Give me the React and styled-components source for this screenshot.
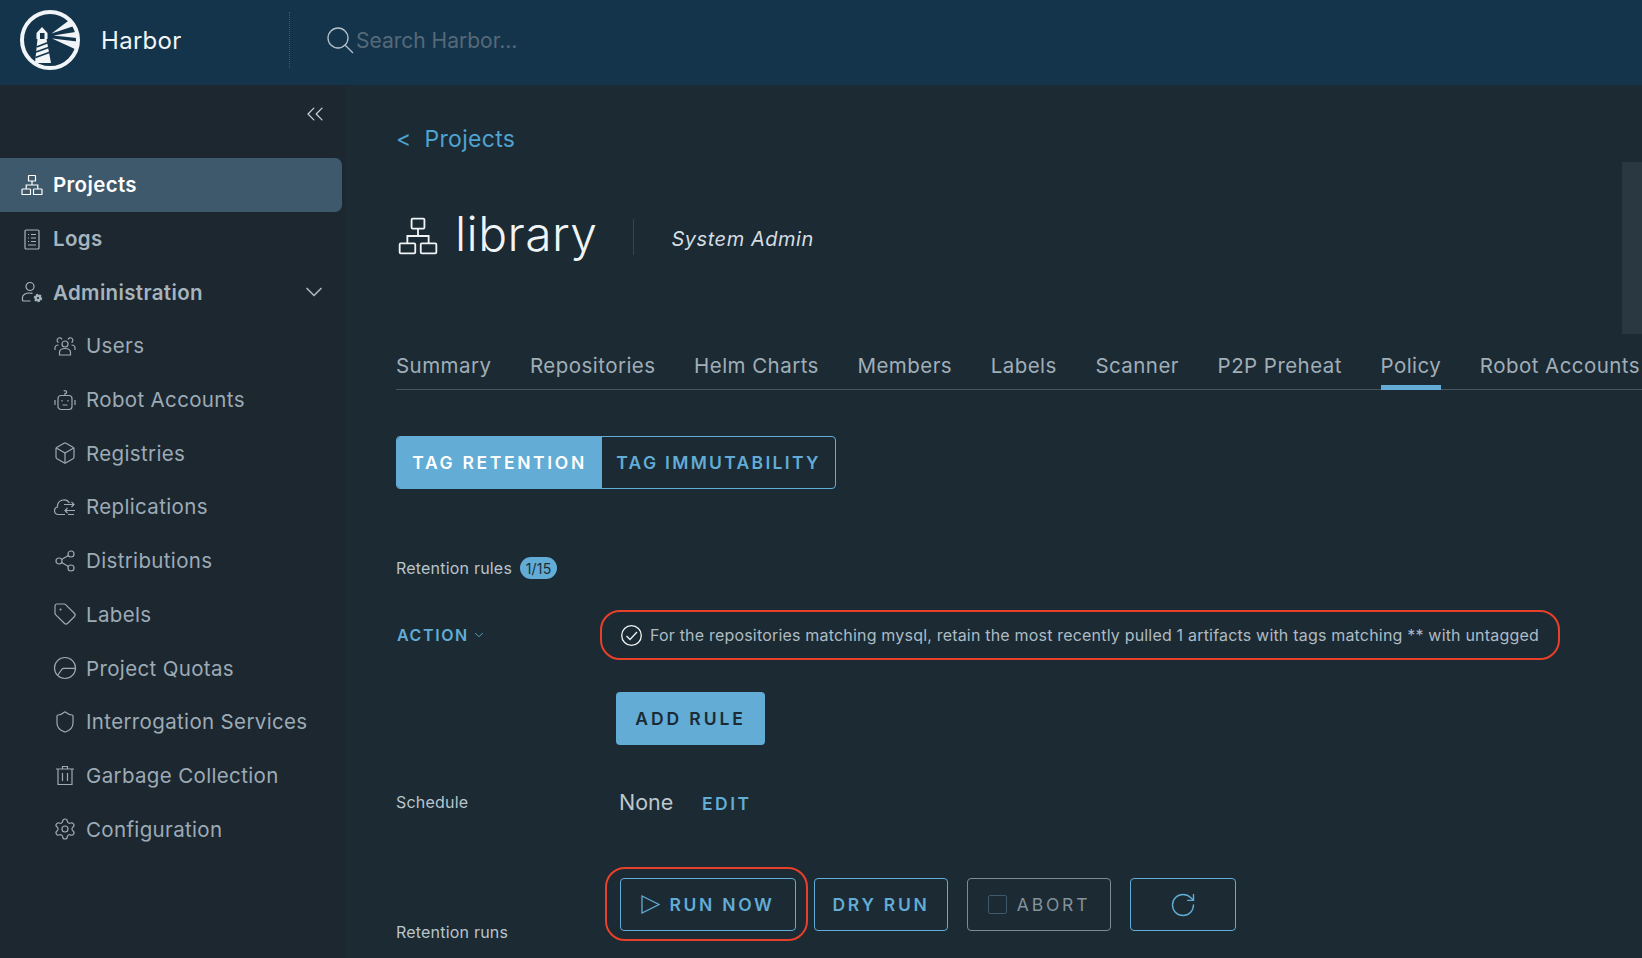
import styled, { createGlobalStyle } from "styled-components";
import { ChevronDown, ChevronsLeft, RotateCw, Settings, Share2, Shield, Tag, Box } from "lucide-react";

const GlobalStyle = createGlobalStyle`
  html, body {
    margin: 0;
    padding: 0;
    height: 100%;
    overflow: hidden;
    background: #1b2a33;
    font-family: Inter, "Liberation Sans", sans-serif;
  }
  * { box-sizing: border-box; }
`;

const BLUE = "#62acd6";

const Page = styled.div`
  width: 1642px;
  height: 958px;
  display: flex;
  flex-direction: column;
  overflow: hidden;
`;

const Header = styled.header`
  height: 85px;
  flex: none;
  display: flex;
  align-items: center;
  padding-bottom: 5px;
  background: #14344c;
`;

const Brand = styled.div`
  width: 289px;
  display: flex;
  align-items: center;
  gap: 21px;
  padding-left: 20px;
  font-size: 24px;
  letter-spacing: 0.3px;
  color: #f2f5f7;
`;

const SearchBox = styled.div`
  height: 56px;
  display: flex;
  align-items: center;
  border-left: 1px dotted #3a5a72;
  padding-left: 37px;
  font-size: 21px;
  color: #566977;
  svg { margin-right: 2px; color: #b4c1ca; }
`;

const Body = styled.div`
  flex: 1;
  display: flex;
  min-height: 0;
`;

const Sidebar = styled.nav`
  width: 346px;
  flex: none;
  background: #1c2730;
`;

const CollapseRow = styled.div`
  height: 54px;
  margin-bottom: 19px;
  display: flex;
  align-items: flex-end;
  justify-content: flex-end;
  padding: 0 17px 11px 0;
  color: #c3ced6;
`;

const NavRow = styled.div`
  height: 53.7px;
  width: 342px;
  display: flex;
  align-items: center;
  gap: 9px;
  padding-left: ${({ $sub }) => ($sub ? "53px" : "20px")};
  padding-right: 14px;
  font-size: 20.5px;
  letter-spacing: 0.35px;
  font-weight: ${({ $sub }) => ($sub ? 400 : 600)};
  color: ${({ $active, $sub }) => ($active ? "#ffffff" : $sub ? "#9cabb6" : "#a6b4be")};
  background: ${({ $active }) => ($active ? "#3e586c" : "transparent")};
  border-radius: ${({ $active }) => ($active ? "0 7px 7px 0" : "0")};
  span { flex: 1; }
`;

const Main = styled.main`
  position: relative;
  flex: 1;
  min-width: 0;
  padding: 39px 0 0 50px;
`;

const Crumb = styled.div`
  height: 30px;
  display: flex;
  align-items: center;
  gap: 13px;
  font-size: 23px;
  letter-spacing: 0.3px;
  color: #4fa3d1;
`;

const TitleRow = styled.div`
  height: 60px;
  margin-top: 52px;
  display: flex;
  align-items: center;
  color: #f1f4f6;
`;

const Title = styled.h1`
  margin: -4px 36px 0 15px;
  font-size: 48px;
  font-weight: 300;
  letter-spacing: 0.4px;
  line-height: 60px;
`;

const Role = styled.div`
  height: 36px;
  display: flex;
  align-items: center;
  margin-top: 1px;
  padding: 4px 0 0 37px;
  border-left: 1px solid #33454f;
  font-size: 20px;
  font-style: italic;
  letter-spacing: 0.55px;
  color: #d5dde2;
`;

const Tabs = styled.div`
  height: 40px;
  margin-top: 84px;
  display: flex;
  gap: 38.6px;
  border-bottom: 1.5px solid #46565f;
`;

const TabItem = styled.div`
  height: 40px;
  padding-top: 2px;
  font-size: 20.5px;
  letter-spacing: 0.45px;
  line-height: 28px;
  white-space: nowrap;
  color: #a0aeb8;
  border-bottom: ${({ $active }) => ($active ? `5px solid ${BLUE}` : "none")};
`;

const Segments = styled.div`
  width: 440px;
  height: 53px;
  margin-top: 46px;
  display: flex;
  border: 1px solid ${BLUE};
  border-radius: 4px;
  overflow: hidden;
`;

const Segment = styled.div`
  display: flex;
  align-items: center;
  justify-content: center;
  width: ${({ $active }) => ($active ? "206px" : "234px")};
  font-size: 17.5px;
  font-weight: 600;
  letter-spacing: ${({ $active }) => ($active ? "2.65px" : "2.3px")};
  color: ${({ $active }) => ($active ? "#ffffff" : BLUE)};
  background: ${({ $active }) => ($active ? BLUE : "transparent")};
`;

const RulesHeading = styled.div`
  height: 24px;
  margin-top: 67px;
  display: flex;
  align-items: center;
  gap: 8px;
  font-size: 16px;
  letter-spacing: 0.2px;
  color: #b9c4cb;
`;

const Badge = styled.span`
  height: 22px;
  width: 37px;
  display: flex;
  align-items: center;
  justify-content: center;
  border-radius: 11px;
  background: ${BLUE};
  font-size: 14px;
  color: #1b2a33;
`;

const RuleRow = styled.div`
  margin-top: 30px;
  display: flex;
  align-items: center;
`;

const ActionLink = styled.div`
  width: 204px;
  display: flex;
  align-items: center;
  gap: 3px;
  padding-left: 1px;
  font-size: 16px;
  font-weight: 600;
  letter-spacing: 1.6px;
  color: ${BLUE};
`;

const Highlight = styled.div`
  border: 2px solid #e8402a;
  border-radius: 20px;
`;

const RuleBox = styled(Highlight)`
  width: 960px;
  height: 50px;
  display: flex;
  align-items: center;
  gap: 8px;
  padding-left: 19px;
  font-size: 16px;
  letter-spacing: 0.19px;
  white-space: nowrap;
  color: #aebbc4;
`;

const Solid = styled.div`
  width: 149px;
  height: 53px;
  margin: 32px 0 0 220px;
  display: flex;
  align-items: center;
  justify-content: center;
  border-radius: 4px;
  background: ${BLUE};
  font-size: 17.5px;
  font-weight: 600;
  letter-spacing: 2.9px;
  color: #1b2a33;
`;

const ScheduleRow = styled.div`
  height: 30px;
  margin-top: 42px;
  display: flex;
  align-items: center;
`;

const FieldLabel = styled.div`
  width: ${({ $w }) => $w}px;
  flex: none;
  font-size: 16px;
  letter-spacing: 0.2px;
  color: #b9c4cb;
`;

const NoneText = styled.div`
  width: 83px;
  font-size: 21.5px;
  color: #bcc7ce;
`;

const EditLink = styled.div`
  margin-top: 2px;
  font-size: 17.5px;
  font-weight: 600;
  letter-spacing: 2.5px;
  color: ${BLUE};
`;

const RunsRow = styled.div`
  margin-top: 50px;
  display: flex;
  align-items: flex-start;
  gap: 6px;
`;

const RunsLabel = styled(FieldLabel)`
  margin-top: 55px;
  margin-right: -6px;
`;

const RunHighlight = styled(Highlight)`
  height: 74px;
  padding: 9px 10px 0 13px;
`;

const ButtonGroup = styled.div`
  display: flex;
  gap: 19px;
  padding-top: 11px;
`;

const Outline = styled.div`
  width: ${({ $w }) => $w}px;
  height: 53px;
  display: flex;
  align-items: center;
  justify-content: center;
  gap: 8px;
  border: 1.5px solid ${({ $disabled }) => ($disabled ? "#7d8b95" : BLUE)};
  border-radius: 4px;
  font-size: 17.5px;
  font-weight: ${({ $disabled }) => ($disabled ? 400 : 600)};
  letter-spacing: ${({ $disabled }) => ($disabled ? "2.8px" : "2.7px")};
  color: ${({ $disabled }) => ($disabled ? "#84929c" : BLUE)};
`;

const EmptyCheck = styled.span`
  width: 19px;
  height: 19px;
  margin-right: 2px;
  border: 1.5px solid #3e586c;
  border-radius: 2px;
`;

const EdgeBar = styled.div`
  position: absolute;
  top: 77px;
  right: 0;
  width: 20px;
  height: 172px;
  background: #2a3842;
`;

const Svg = ({ size = 24, sw = 1.2, children }) => (
  <svg width={size} height={size} viewBox="0 0 24 24" fill="none" stroke="currentColor" strokeWidth={sw} style={{ flex: "none" }}>
    {children}
  </svg>
);

const ProjectsIcon = ({ size, sw }) => (
  <Svg size={size} sw={sw}>
    <rect x="8.5" y="2.5" width="7" height="5.5" rx=".6" />
    <rect x="2" y="16" width="8.5" height="5.5" rx=".6" />
    <rect x="13.5" y="16" width="8.5" height="5.5" rx=".6" />
    <path d="M12 8v4M6.2 16v-4h11.6v4" />
  </Svg>
);

const LogsIcon = () => (
  <Svg>
    <rect x="5" y="3" width="14" height="19" rx="1" />
    <path d="M8 7.5h1M11 7.5h5M8 11h1M11 11h5M8 14.5h1M11 14.5h5M8 18h8" />
  </Svg>
);

const AdminIcon = () => (
  <Svg>
    <circle cx="10" cy="6.5" r="4" />
    <path d="M2.5 21v-3.5c0-2.5 3-4.5 7-4.5 1 0 2 .1 3 .4M2.5 21h8" />
    <circle cx="18" cy="18" r="3.2" fill="currentColor" stroke="currentColor" strokeWidth="2" strokeDasharray="2 1.2" />
    <circle cx="18" cy="18" r="1.1" fill="#1c2730" stroke="none" />
  </Svg>
);

const UsersIcon = () => (
  <Svg>
    <circle cx="12" cy="10" r="3" />
    <path d="M6.5 21v-2.5c0-2.5 2.5-4 5.5-4s5.500 1.500 5.500 4V21z" />
    <path d="M9 5.500a2.500 2.500 0 1 0-3.500 3M15 5.500a2.500 2.500 0 1 1 3.500 3M2 16v-2c0-2 1.500-3 3.500-3M22 16v-2c0-2-1.500-3-3.500-3" />
  </Svg>
);

const RobotIcon = () => (
  <Svg>
    <rect x="5" y="7.500" width="14" height="14" rx="3" />
    <path d="M12 7.500V5.500c1.500 0 1.800-1 1.500-2-.4-1-2-1.200-2.800-.3" />
    <path d="M9 12v1.500M15 12v1.500M9.500 17h5M2 12v5M22 12v5" />
  </Svg>
);

const CloudIcon = () => (
  <Svg>
    <path d="M12 19.500H5.500A3.800 3.800 0 0 1 4.500 12a6.500 6.500 0 0 1 12-4" />
    <path d="M11 9.500h10M18.500 7l2.500 2.500-2.500 2.500M22 15.500H12M14.500 13L12 15.500l2.500 2.500M21 19.500h-6" />
  </Svg>
);

const QuotaIcon = () => (
  <Svg>
    <circle cx="12" cy="12" r="10.500" />
    <path d="M4.500 19.500L9 13.200c.5-.6 1-.8 1.800-.8H22" />
  </Svg>
);

const TrashIcon = () => (
  <Svg>
    <path d="M3 6h18M9.500 6V3.500h5V6M5 6v15.500h14V6M9.500 10v8M14.500 10v8" />
  </Svg>
);

const CheckCircle = () => (
  <svg width="21" height="21" viewBox="0 0 21 21" fill="none" stroke="#eef2f4" strokeWidth="1.300" style={{ flex: "none" }}>
    <circle cx="10.500" cy="10.500" r="9.800" />
    <path d="M5.500 11l3.500 3.500 7-7.500" />
  </svg>
);

const SearchGlyph = () => (
  <svg width="27" height="27" viewBox="0 0 27 27" fill="none" stroke="currentColor" strokeWidth="1.300" style={{ flex: "none" }}>
    <circle cx="11" cy="11" r="10" />
    <path d="M18 18l8 8" />
  </svg>
);

const PlayGlyph = () => (
  <svg width="19" height="19" viewBox="0 0 19 19" fill="none" stroke="currentColor" strokeWidth="1.300" style={{ flex: "none", marginRight: 1 }}>
    <path d="M1 1l17 8.500L1 18z" />
  </svg>
);

const HarborLogo = () => (
  <svg width="60" height="60" viewBox="0 0 60 60" style={{ flex: "none" }}>
    <circle cx="30" cy="30" r="28" fill="#14344c" stroke="#f2f5f7" strokeWidth="4" />
    <path d="M15 53l2.500-24h-1v-6l5.500-6 5.500 6v6h-1L31 53z" fill="#f2f5f7" />
    <rect x="20" y="23" width="4.500" height="6" fill="#14344c" />
    <path d="M16.500 37l13-5M16 42l14-5M15.500 47.500l15-5.500" stroke="#14344c" strokeWidth="1.800" />
    <path d="M31.500 23.500L49.500 10l4.500 6zM33.500 25.500L57 21.700l2 6.600zM32 28.500l27 3.200-2 8.300z" fill="#f2f5f7" />
  </svg>
);

const navItems = [
  { label: "Users", icon: <UsersIcon /> },
  { label: "Robot Accounts", icon: <RobotIcon /> },
  { label: "Registries", icon: <Box size={24} strokeWidth={1.2} /> },
  { label: "Replications", icon: <CloudIcon /> },
  { label: "Distributions", icon: <Share2 size={24} strokeWidth={1.2} /> },
  { label: "Labels", icon: <Tag size={24} strokeWidth={1.2} /> },
  { label: "Project Quotas", icon: <QuotaIcon /> },
  { label: "Interrogation Services", icon: <Shield size={24} strokeWidth={1.2} /> },
  { label: "Garbage Collection", icon: <TrashIcon /> },
  { label: "Configuration", icon: <Settings size={24} strokeWidth={1.2} /> },
];

const tabs = ["Summary", "Repositories", "Helm Charts", "Members", "Labels", "Scanner", "P2P Preheat", "Policy", "Robot Accounts"];

export default function App() {
  return (
    <Page>
      <GlobalStyle />
      <Header>
        <Brand>
          <HarborLogo />
          Harbor
        </Brand>
        <SearchBox>
          <SearchGlyph />
          Search Harbor...
        </SearchBox>
      </Header>
      <Body>
        <Sidebar>
          <CollapseRow>
            <ChevronsLeft size={28} strokeWidth={1.1} />
          </CollapseRow>
          <NavRow $active>
            <ProjectsIcon />
            <span>Projects</span>
          </NavRow>
          <NavRow>
            <LogsIcon />
            <span>Logs</span>
          </NavRow>
          <NavRow>
            <AdminIcon />
            <span>Administration</span>
            <ChevronDown size={28} strokeWidth={1.5} />
          </NavRow>
          {navItems.map((item) => (
            <NavRow $sub key={item.label}>
              {item.icon}
              <span>{item.label}</span>
            </NavRow>
          ))}
        </Sidebar>
        <Main>
          <EdgeBar />
          <Crumb>
            <span>&lt;</span>
            <span>Projects</span>
          </Crumb>
          <TitleRow>
            <ProjectsIcon size={44} sw={1} />
            <Title>library</Title>
            <Role>System Admin</Role>
          </TitleRow>
          <Tabs>
            {tabs.map((tab) => (
              <TabItem $active={tab === "Policy"} key={tab}>
                {tab}
              </TabItem>
            ))}
          </Tabs>
          <Segments>
            <Segment $active>TAG RETENTION</Segment>
            <Segment>TAG IMMUTABILITY</Segment>
          </Segments>
          <RulesHeading>
            Retention rules
            <Badge>1/15</Badge>
          </RulesHeading>
          <RuleRow>
            <ActionLink>
              ACTION
              <ChevronDown size={14} strokeWidth={1.6} />
            </ActionLink>
            <RuleBox>
              <CheckCircle />
              For the repositories matching mysql, retain the most recently pulled 1 artifacts with tags matching ** with untagged
            </RuleBox>
          </RuleRow>
          <Solid>ADD RULE</Solid>
          <ScheduleRow>
            <FieldLabel $w={223}>Schedule</FieldLabel>
            <NoneText>None</NoneText>
            <EditLink>EDIT</EditLink>
          </ScheduleRow>
          <RunsRow>
            <RunsLabel $w={209}>Retention runs</RunsLabel>
            <RunHighlight>
              <Outline $w={176}>
                <PlayGlyph />
                RUN NOW
              </Outline>
            </RunHighlight>
            <ButtonGroup>
              <Outline $w={134}>DRY RUN</Outline>
              <Outline $w={144} $disabled>
                <EmptyCheck />
                ABORT
              </Outline>
              <Outline $w={106}>
                <RotateCw size={28} strokeWidth={1.2} />
              </Outline>
            </ButtonGroup>
          </RunsRow>
        </Main>
      </Body>
    </Page>
  );
}
